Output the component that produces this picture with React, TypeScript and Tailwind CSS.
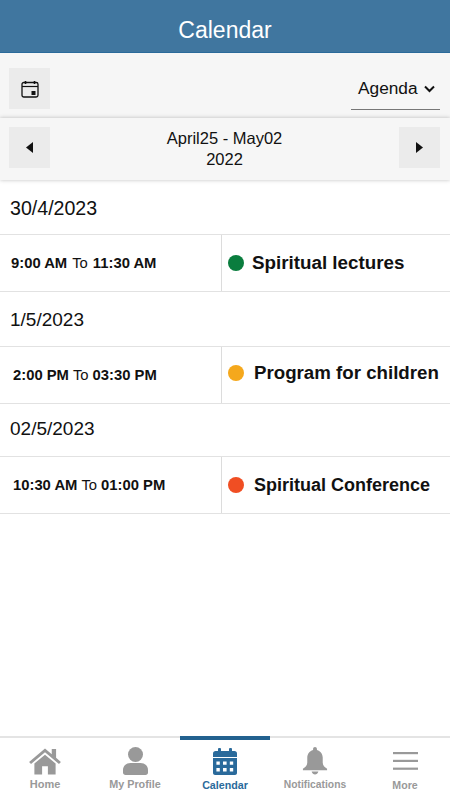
import React from "react";

function DateRow({ h, size, children }: { h: string; size: string; children: React.ReactNode }) {
  return <div className={`flex items-center pl-[10px] text-[#111] border-b border-[#e2e2e2] ${size} ${h}`}>{children}</div>;
}

function EventRow({ start, end, title, pad, bg, rowAdj, titleCls, gap }: { start: string; end: string; title: string; pad: string; bg: string; rowAdj: string; titleCls: string; gap: string }) {
  return (
    <div className="flex h-[57px] border-b border-[#e2e2e2]">
      <div className={`w-[222px] shrink-0 flex items-center border-r border-[#dcdcdc] text-[14.8px] text-[#111] ${pad}`}>
        <span className="font-bold">{start}</span>
        <span className={gap}>To</span>
        <span className="font-bold">{end}</span>
      </div>
      <div className={`flex items-center pl-[6px] min-w-0 ${rowAdj}`}>
        <span className={`w-[16px] h-[16px] rounded-full shrink-0 ${bg}`} />
        <span className={`font-bold text-[#111] whitespace-nowrap ${titleCls}`}>{title}</span>
      </div>
    </div>
  );
}

function Tab({ label, active, icon, up, size }: { label: string; active?: boolean; icon: React.ReactNode; up?: boolean; size: string }) {
  return (
    <div className="relative flex-1 flex flex-col items-center pt-[9px]">
      {active && <div className="absolute top-[-2px] left-0 right-0 h-[4px] bg-[#22618f]" />}
      <div className="h-[28px] flex items-center justify-center">{icon}</div>
      <span className={`font-bold leading-[14px] ${size} ${up ? "mt-[3px]" : "mt-[2px]"} ${active ? "text-[#2a6a9b]" : "text-[#999999]"}`}>{label}</span>
    </div>
  );
}

export default function App() {
  return (
    <div className="w-[450px] h-[800px] flex flex-col bg-white overflow-hidden font-['Liberation_Sans',Arial,sans-serif]">
      <header className="h-[53px] shrink-0 bg-[#40769f] border-b border-[#2a6a9a] flex items-center justify-center pt-[8px] text-white text-[23px]">
        Calendar
      </header>
      <div className="h-[65px] shrink-0 bg-[#f6f6f6] flex items-start justify-between pl-[9px] pr-[10px] pt-[15px]">
        <button className="w-[41px] h-[41px] bg-[#ebebeb] flex items-center justify-center">
          <svg width="18" height="18" viewBox="0 0 18 18" fill="none">
            <rect x="1" y="2.5" width="16" height="14.5" rx="1.8" stroke="#111" strokeWidth="1.3" />
            <path d="M1 6.5H17" stroke="#111" strokeWidth="1.2" />
            <path d="M4.5 1V4M13.5 1V4" stroke="#111" strokeWidth="1.6" />
            <rect x="10.5" y="11" width="4" height="4" fill="#111" />
          </svg>
        </button>
        <div className="w-[89px] h-[42px] border-b border-[#777] flex items-center justify-between pl-[7px] pr-[5px] pt-[1px] text-[17.3px] text-[#111]">
          <span>Agenda</span>
          <svg width="11" height="8" viewBox="0 0 11 8" fill="none"><path d="M1 1.5L5.5 6L10 1.5" stroke="#111" strokeWidth="2" /></svg>
        </div>
      </div>
      <div className="h-[62px] shrink-0 bg-[#f6f6f6] flex items-center justify-between pl-[9px] pr-[10px] shadow-[0_0_4px_rgba(0,0,0,0.25)] z-10">
        <button className="w-[41px] h-[41px] mb-[4px] bg-[#ebebeb] flex items-center justify-center">
          <svg width="7" height="11" viewBox="0 0 7 11"><path d="M7 0V11L0 5.5Z" fill="#111" /></svg>
        </button>
        <div className="text-center text-[16.5px] leading-[21px] text-[#111]">
          <div>April25 - May02</div>
          <div>2022</div>
        </div>
        <button className="w-[41px] h-[41px] mb-[4px] bg-[#ebebeb] flex items-center justify-center">
          <svg width="7" height="11" viewBox="0 0 7 11"><path d="M0 0V11L7 5.5Z" fill="#111" /></svg>
        </button>
      </div>
      <main className="flex-1 min-h-0">
        <DateRow h="h-[55px] pt-[4px]" size="text-[19.6px]">30/4/2023</DateRow>
        <EventRow start="9:00 AM" end="11:30 AM" bg="bg-[#0a7d3e]" title="Spiritual lectures" pad="pl-[11px]" rowAdj="" titleCls="ml-[8px] text-[18.8px]" gap="mx-[5px]" />
        <DateRow h="h-[55px] pt-[2px]" size="text-[19px]">1/5/2023</DateRow>
        <EventRow start="2:00 PM" end="03:30 PM" bg="bg-[#f5a81c]" title="Program for children" pad="pl-[13px]" rowAdj="pb-[4px]" titleCls="ml-[10px] text-[18.7px]" gap="mx-[4px]" />
        <DateRow h="h-[53px] pb-[2px]" size="text-[19px]">02/5/2023</DateRow>
        <EventRow start="10:30 AM" end="01:00 PM" bg="bg-[#f04e23]" title="Spiritual Conference" pad="pl-[13px]" rowAdj="" titleCls="ml-[10px] pt-[1px] text-[18px]" gap="mx-[4px]" />
      </main>
      <nav className="h-[64px] shrink-0 border-t-2 border-[#e4e4e4] flex">
        <Tab label="Home" size="text-[11px]" icon={
          <svg width="34" height="27" viewBox="0 0 34 28" fill="#999">
            <path d="M17 0.5L0.5 14.5L2.5 16.5L17 4.5L31.5 16.5L33.5 14.5L28.5 10V1H24V6.5Z" />
            <path d="M17 7L6 16V27.5H14V19H20V27.5H28V16Z" />
          </svg>} />
        <Tab label="My Profile" size="text-[10.8px]" icon={
          <svg width="25" height="28" viewBox="0 0 25 28" fill="#999">
            <circle cx="12.5" cy="7.5" r="7.5" />
            <path d="M0 25.5V23C0 19 3 16 7.5 16H17.5C22 16 25 19 25 23V25.5C25 27 24 28 22.5 28H2.5C1 28 0 27 0 25.5Z" />
          </svg>} />
        <Tab up active label="Calendar" size="text-[10.7px]" icon={
          <svg width="24" height="27" viewBox="0 0 24 27" fill="#2a6a9b">
            <path d="M0 5.5C0 4 1 3 2.5 3H21.5C23 3 24 4 24 5.5V9H0Z" />
            <rect x="5" y="0" width="3" height="5" rx="1" />
            <rect x="16" y="0" width="3" height="5" rx="1" />
            <path fillRule="evenodd" d="M0 10H24V25C24 26 23 27 22 27H2C1 27 0 26 0 25ZM3.4 13.4V16.8H6.8V13.4ZM10 13.4V16.8H13.6V13.4ZM16.8 13.4V16.8H20.2V13.4ZM3.4 20V23.4H6.8V20ZM10 20V23.4H13.6V20ZM16.8 20V23.4H20.2V20Z" />
          </svg>} />
        <Tab up label="Notifications" size="text-[10.3px]" icon={
          <svg width="26" height="28" viewBox="0 0 26 29" fill="#999">
            <path d="M13 0C11.8 0 11 .8 11 2V3C7 4 5 7.5 5 11V16C5 19 3 21 .5 22.5V24H25.5V22.5C23 21 21 19 21 16V11C21 7.5 19 4 15 3V2C15 .8 14.2 0 13 0Z" />
            <path d="M9.5 25.5H16.5C16 27.5 14.5 28.5 13 28.5C11.5 28.5 10 27.5 9.5 25.5Z" />
          </svg>} />
        <Tab up label="More" size="text-[10.6px]" icon={
          <svg width="25" height="18" viewBox="0 0 25 18" fill="#999">
            <rect x="0" y="0" width="25" height="2.2" />
            <rect x="0" y="7.8" width="25" height="2.2" />
            <rect x="0" y="15.6" width="25" height="2.2" />
          </svg>} />
      </nav>
    </div>
  );
}
